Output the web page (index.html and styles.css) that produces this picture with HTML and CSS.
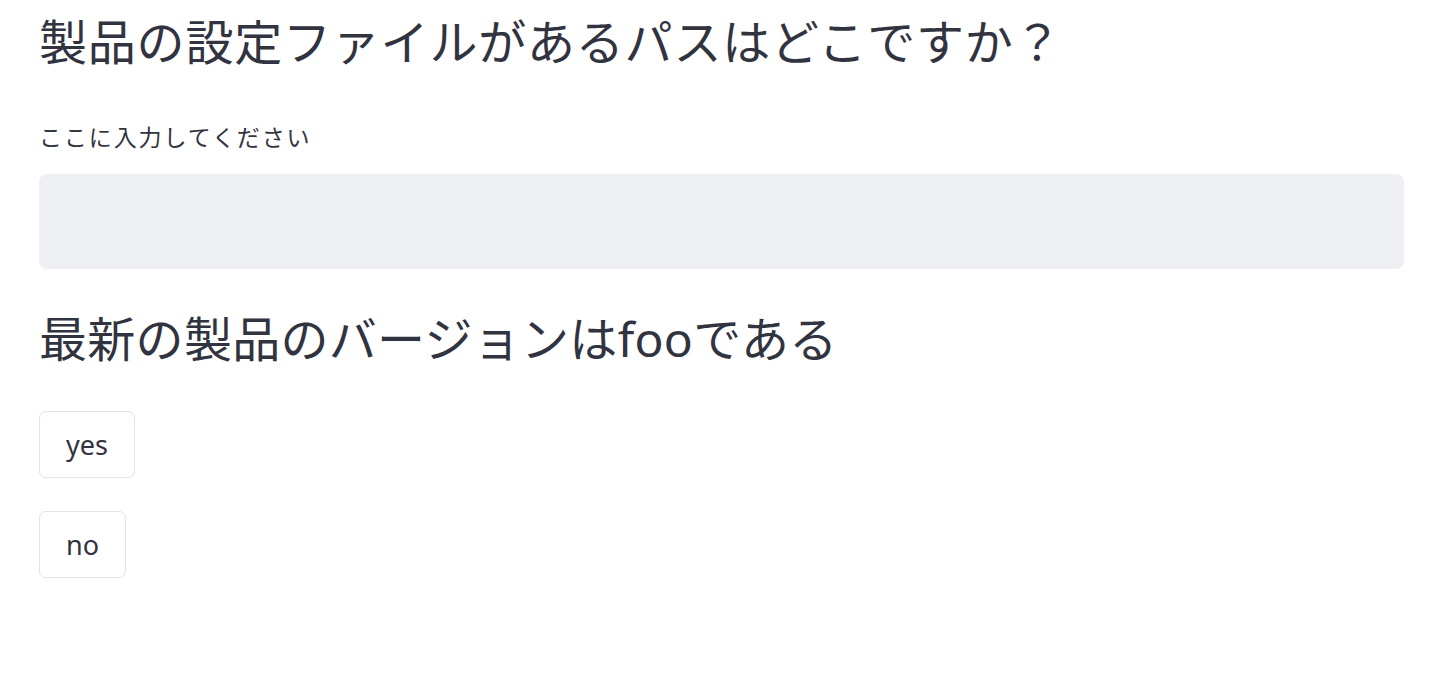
FILE: index.html
```html
<!DOCTYPE html>
<html lang="ja">
<head>
<meta charset="utf-8">
<title>設定</title>
<link rel="stylesheet" href="styles.css">
</head>
<body>
<main class="main">
  <h2 class="heading heading-first">製品の設定ファイルがあるパスはどこですか？</h2>
  <div class="field">
    <label class="field-label" for="path">ここに入力してください</label>
    <div class="field-box"><input id="path" class="field-input" type="text"></div>
  </div>
  <h2 class="heading heading-second">最新の製品のバージョンはfooである</h2>
  <div class="buttons">
    <button class="btn" type="button">yes</button>
    <button class="btn" type="button">no</button>
  </div>
</main>
</body>
</html>
```

FILE: styles.css
```css
html, body {
  margin: 0;
  padding: 0;
  background: #ffffff;
}
body {
  font-family: "Noto Sans", "Noto Sans CJK JP", sans-serif;
  color: #31333f;
}
.main {
  padding: 12px 36px 0 39px;
  display: flex;
  flex-direction: column;
}
.heading {
  margin: 0;
  font-size: 48px;
  font-weight: 400;
  line-height: 60px;
  letter-spacing: 0.8px;
  color: #31333f;
}
.field {
  margin-top: 50px;
  display: flex;
  flex-direction: column;
}
.field-label {
  font-size: 23px;
  line-height: 30px;
  letter-spacing: 1.9px;
  color: #31333f;
}
.field-box {
  margin-top: 22px;
  height: 95px;
  background: #eff0f4;
  border-radius: 8px;
  display: flex;
}
.field-input {
  flex: 1;
  border: none;
  background: transparent;
  outline: none;
  font: inherit;
  font-size: 28px;
  padding: 0 20px;
  color: #31333f;
}
.heading-second {
  margin-top: 40px;
  letter-spacing: 0.3px;
}
.buttons {
  margin-top: 42px;
  display: flex;
  flex-direction: column;
  align-items: flex-start;
  gap: 33px;
}
.btn {
  height: 67px;
  padding: 0 26px;
  border: 1.5px solid #e2e3e9;
  border-radius: 7px;
  background: #ffffff;
  font-family: "Noto Sans", "Noto Sans CJK JP", sans-serif;
  font-size: 27px;
  color: #31333f;
  cursor: pointer;
}
```
